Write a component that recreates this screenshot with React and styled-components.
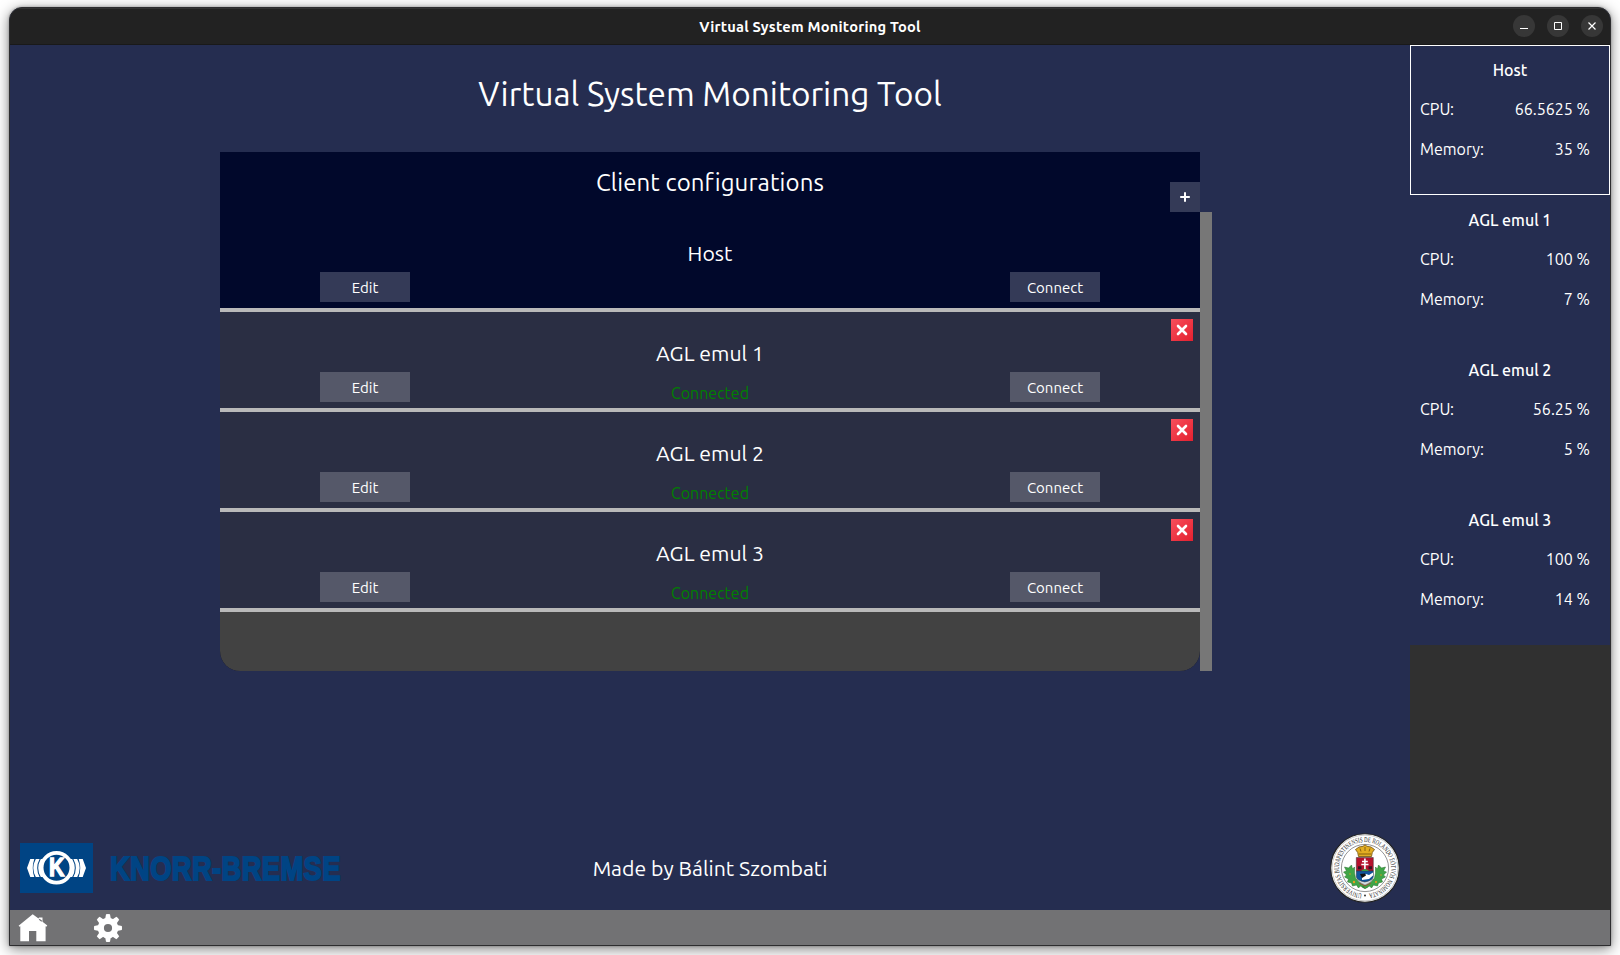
import React from "react";
import styled, { createGlobalStyle, css } from "styled-components";

const GlobalStyle = createGlobalStyle`
  * { box-sizing: border-box; }
  html, body { margin: 0; padding: 0; }
  body {
    width: 1620px;
    height: 955px;
    overflow: hidden;
    background: #fff;
    font-family: Ubuntu, "Noto Sans", sans-serif;
    color: #fff;
  }
  button { font-family: inherit; color: inherit; border: 0; padding: 0; cursor: pointer; }
`;

const Desktop = styled.div`
  width: 1620px;
  height: 955px;
  padding: 7px 9px 9px;
  overflow: hidden;
`;

const Window = styled.div`
  width: 1602px;
  height: 939px;
  display: flex;
  flex-direction: column;
  border: 1px solid #2d2d2f;
  border-radius: 13px 13px 0 0;
  overflow: hidden;
  background: #252d50;
  box-shadow: 0 3px 14px rgba(0, 0, 0, 0.5), 0 0 3px rgba(0, 0, 0, 0.3);
`;

const TitleBar = styled.header`
  flex: none;
  height: 37px;
  display: grid;
  grid-template-columns: 1fr auto 1fr;
  align-items: center;
  background: #222;
  border-top: 1px solid #333;
  border-bottom: 1px solid #191919;
`;

const WindowTitle = styled.div`
  grid-column: 2;
  font-size: 14.67px;
  font-weight: 700;
  line-height: 20px;
  letter-spacing: 0.21px;
`;

const WindowControls = styled.div`
  display: flex;
  justify-content: flex-end;
  gap: 12px;
  padding-right: 7px;
  padding-bottom: 1px;
`;

const ControlButton = styled.button`
  width: 22px;
  height: 22px;
  border-radius: 50%;
  background: #373737;
  display: grid;
  place-items: center;
`;

const Body = styled.div`
  flex: 1;
  min-height: 0;
  display: flex;
`;

const Main = styled.main`
  width: 1400px;
  display: flex;
  flex-direction: column;
  align-items: center;
`;

const PageTitle = styled.h1`
  margin: 0;
  height: 107px;
  padding-top: 25px;
  font-size: 33.33px;
  font-weight: 400;
  line-height: 48px;
`;

const Panel = styled.section`
  width: 980px;
  background: #01082b;
  border-radius: 0 0 20px 20px;
`;

const PanelHeader = styled.div`
  height: 60px;
  display: grid;
  grid-template-columns: 1fr auto 1fr;
`;

const PanelTitle = styled.h2`
  grid-column: 2;
  margin: 0;
  padding-top: 15px;
  font-size: 24px;
  font-weight: 400;
  line-height: 32px;
  letter-spacing: 0.11px;
`;

const AddButton = styled.button`
  justify-self: end;
  align-self: end;
  width: 30px;
  height: 30px;
  background: #343a57;
  display: grid;
  place-items: center;
`;

const ListArea = styled.div`
  display: flex;
  width: 992px;
  height: 459px;
`;

const ClientList = styled.div`
  width: 980px;
  height: 459px;
  overflow: hidden;
  background: #424242;
  border-radius: 0 0 20px 20px;
`;

const ScrollBar = styled.div`
  width: 12px;
  background: #777;
`;

const ClientRow = styled.div`
  height: 100px;
  display: grid;
  grid-template-columns: 90px 600px 90px;
  justify-content: center;
  align-items: end;
  padding-bottom: 6px;
  border-bottom: 4px solid #b9b9b9;
  background: ${(p) => (p.$selected ? "#01082b" : "#2a2e43")};
  position: relative;
`;

const ClientInfo = styled.div`
  align-self: start;
  height: 90px;
  padding-top: 27px;
  text-align: center;
`;

const ClientName = styled.div`
  font-size: 21.25px;
  line-height: 28px;
`;

const ClientStatus = styled.div`
  margin-top: 15px;
  font-size: 16px;
  line-height: 22px;
  color: #008000;
`;

const ActionButton = styled.button`
  width: 90px;
  height: 30px;
  padding-top: 1px;
  font-size: 15px;
  line-height: 29px;
  background: ${(p) => (p.$selected ? "#343a57" : "#555869")};
`;

const RemoveButton = styled.button`
  position: absolute;
  top: 7px;
  right: 7px;
  width: 22px;
  height: 22px;
  background: linear-gradient(135deg, #f94f5c, #e3202f);
  display: grid;
  place-items: center;
`;

const Credits = styled.div`
  margin-top: auto;
  width: 1400px;
  height: 84px;
  display: grid;
  grid-template-columns: 1fr auto 1fr;
  align-items: center;
  padding: 0 10px;
`;

const CompanyMark = styled.div`
  display: flex;
  align-items: center;
`;

const Author = styled.div`
  font-size: 21.25px;
  line-height: 28px;
`;

const SealSlot = styled.div`
  display: flex;
  justify-content: flex-end;
`;

const Sidebar = styled.aside`
  width: 200px;
  background: #303030;
`;

const StatCard = styled.div`
  height: 150px;
  padding: 0 20px 0 10px;
  background: #252d50;
  ${(p) =>
    p.$selected
      ? css`
          border: 1px solid #fff;
          padding: 0 19px 0 9px;
          & > :first-child { padding-top: 14px; height: 43px; }
        `
      : ""}
`;

const StatName = styled.div`
  height: 44px;
  padding-top: 15px;
  margin-right: -10px;
  text-align: center;
  font-size: 16px;
  font-weight: 500;
  line-height: 21px;
`;

const StatLine = styled.div`
  height: 40px;
  display: flex;
  justify-content: space-between;
  align-items: center;
  font-size: 16px;
  line-height: 20px;
`;

const NavBar = styled.footer`
  flex: none;
  height: 35px;
  display: flex;
  align-items: center;
  gap: 45px;
  padding-left: 8px;
  background: #727274;
`;

const NavButton = styled.button`
  width: 30px;
  height: 30px;
  background: transparent;
  display: grid;
  place-items: center;
`;

const Wordmark = styled.svg`
  overflow: visible;
`;

const clients = [
  { name: "Host", cpu: "66.5625 %", memory: "35 %" },
  { name: "AGL emul 1", cpu: "100 %", memory: "7 %", connected: true },
  { name: "AGL emul 2", cpu: "56.25 %", memory: "5 %", connected: true },
  { name: "AGL emul 3", cpu: "100 %", memory: "14 %", connected: true },
];

function KnorrEmblem() {
  return (
    <svg width="73" height="50" viewBox="0 0 73 50">
      <rect width="73" height="50" fill="#004484" />
      <circle cx="36.5" cy="24.8" r="14.9" fill="none" stroke="#fff" strokeWidth="3.8" />
      <g fill="#fff">
        <path d="M10.300 16H14.300Q11.200 25 14.300 34H10.300L7 25z" />
        <path d="M15.800 16H19.600Q14.800 25 19.600 34H15.800Q10.800 25 15.800 16z" />
        <path d="M20.800 16H24.200Q17.400 25 24.200 34H20.800Q15.600 25 20.800 16z" />
        <path d="M62.700 16H58.700Q61.800 25 58.700 34H62.700L66 25z" />
        <path d="M57.200 16H53.400Q58.200 25 53.400 34H57.200Q62.200 25 57.200 16z" />
        <path d="M52.200 16H48.800Q55.600 25 48.800 34H52.200Q57.400 25 52.200 16z" />
      </g>
      <text
        x="36.8"
        y="33.4"
        textAnchor="middle"
        fontFamily="Liberation Sans, sans-serif"
        fontWeight="700"
        fontSize="25"
        textLength="15.5"
        lengthAdjust="spacingAndGlyphs"
        fill="#fff"
        stroke="#fff"
        strokeWidth="1.3"
      >
        K
      </text>
    </svg>
  );
}

function KnorrWordmark() {
  return (
    <Wordmark width="256" height="50" viewBox="0 0 256 50">
      <text
        transform="translate(17 37) scale(0.8 1)"
        fontFamily="Liberation Sans, sans-serif"
        fontWeight="700"
        fontSize="34"
        letterSpacing="0.6"
        fill="#004484"
        stroke="#004484"
        strokeWidth="2"
      >
        KNORR-BREMSE
      </text>
    </Wordmark>
  );
}

function UniversitySeal() {
  return (
    <svg width="70" height="70" viewBox="0 0 70 70">
      <defs>
        <path id="seal-ring" d="M32 60.800A26 26 0 1 1 38 60.800" />
      </defs>
      <circle cx="35" cy="35" r="34.3" fill="#fff" stroke="#222" strokeWidth="1.1" />
      <circle cx="35" cy="35" r="32.9" fill="none" stroke="#999" strokeWidth="0.5" />
      <circle cx="35" cy="35" r="23.6" fill="none" stroke="#777" strokeWidth="0.8" />
      <text fontFamily="Liberation Serif, serif" fontSize="7.2" fill="#222">
        <textPath href="#seal-ring" textLength="156" lengthAdjust="spacingAndGlyphs">
          UNIVERSITAS BUDAPESTINENSIS DE ROLANDO EÖTVÖS NOMINATA
        </textPath>
      </text>
      <circle cx="35" cy="62.500" r="0.9" fill="#222" />
      <g fill="#3fa546" stroke="#236b29" strokeWidth="0.5">
        <path d="M21.500 32l1 4 2-2 0 6 1 5 4 4 5 3 3 2-3 1.500-4-2.500-2 2-2-3-4 1-1-3-4-1 1-3-4-2 2-2-3-3 3-1-2-4 4 1z" />
        <path d="M48.500 32l-1 4-2-2 0 6-1 5-4 4-5 3-3 2 3 1.500 4-2.500 2 2 2-3 4 1 1-3 4-1-1-3 4-2-2-2 3-3-3-1 2-4-4 1z" />
      </g>
      <path d="M27 46q2 4 8 6 6-2 8-6" fill="#d8dde3" stroke="#777" strokeWidth="0.6" />
      <path d="M26.300 24.500h17v13.500h-17z" fill="#b5122d" stroke="#333" strokeWidth="0.5" />
      <path d="M26.300 38h17v6q-1 3.500-8.500 5-7.500-1.500-8.500-5z" fill="#0f559c" stroke="#333" strokeWidth="0.5" />
      <path d="M34.900 25.500v11M32 28.500h5.800M31.300 31.500h7.200" stroke="#fff" strokeWidth="1.600" />
      <path d="M31 38q4-4 8 0z" fill="#3c9a42" />
      <path d="M28 34.700h3.500M38.500 34.700h3.500" stroke="#351522" strokeWidth="3" />
      <path d="M32 44l4-3 3 1 4-2.500v3l-4 3.500-7 1z" fill="#fff" />
      <path d="M30 41l5-.500 1 2-4 2.500z" fill="#111" />
      <path
        d="M28.500 23.500l-.800-4-2.200-3 3.500-2.500 4-.700 2-1.500 2 1.500 4 .700 3.500 2.500-2.200 3-.800 4z"
        fill="#e3ae22"
        stroke="#6d4c0b"
        strokeWidth="0.800"
      />
      <path d="M29 21h12M31 18.500l-1-3M35 18v-4M39 18.500l1-3" stroke="#7c570d" strokeWidth="0.900" />
      <g fill="#ef9a20">
        <circle cx="24" cy="49" r="1.200" />
        <circle cx="20" cy="41" r="0.700" />
        <circle cx="46" cy="49" r="1" />
        <circle cx="51" cy="42" r="0.700" />
      </g>
      <path d="M29 50l6 3 6-3" fill="none" stroke="#b63a2e" strokeWidth="0.700" />
    </svg>
  );
}

function HomeIcon() {
  return (
    <svg width="30" height="30" viewBox="0 0 30 30">
      <path
        fill="#fff"
        d="M14.700 1.300L20.500 5.600L21 4.600H24.500V8.800L29.300 12.600L28.300 13.700L27.600 13.200V28.200H18.300V18H11V28.200H2.300V13.200L1.600 13.700L.600 12.700z"
      />
      <path d="M21.200 6.200L23.800 8.200" stroke="#727274" strokeWidth="1.200" />
    </svg>
  );
}

function GearIcon() {
  const teeth = [0, 45, 90, 135, 180, 225, 270, 315];
  return (
    <svg width="30" height="30" viewBox="0 0 30 30">
      <circle cx="15" cy="15" r="7.200" fill="none" stroke="#fff" strokeWidth="6.200" />
      {teeth.map((angle) => (
        <path
          key={angle}
          d="M12.100 6L13 1.200Q15 .700 17 1.200L17.900 6z"
          fill="#fff"
          transform={`rotate(${angle} 15 15)`}
        />
      ))}
    </svg>
  );
}

function Client({ client, selected }) {
  return (
    <ClientRow $selected={selected}>
      <ActionButton $selected={selected}>Edit</ActionButton>
      <ClientInfo>
        <ClientName>{client.name}</ClientName>
        {client.connected && <ClientStatus>Connected</ClientStatus>}
      </ClientInfo>
      <ActionButton $selected={selected}>Connect</ActionButton>
      {!selected && (
        <RemoveButton aria-label="Remove">
          <svg width="12" height="12" viewBox="0 0 12 12">
            <path d="M2 2l8 8M10 2l-8 8" stroke="#fff" strokeWidth="2.600" strokeLinecap="round" />
          </svg>
        </RemoveButton>
      )}
    </ClientRow>
  );
}

export default function App() {
  return (
    <Desktop>
      <GlobalStyle />
      <Window>
        <TitleBar>
          <WindowTitle>Virtual System Monitoring Tool</WindowTitle>
          <WindowControls>
            <ControlButton aria-label="Minimize">
              <svg width="10" height="10" viewBox="0 0 10 10">
                <path d="M1 7.500h8" stroke="#fff" />
              </svg>
            </ControlButton>
            <ControlButton aria-label="Maximize">
              <svg width="8" height="8" viewBox="0 0 8 8">
                <path d="M.5 .5h7v7h-7z" fill="none" stroke="#fff" />
              </svg>
            </ControlButton>
            <ControlButton aria-label="Close">
              <svg width="8" height="8" viewBox="0 0 8 8">
                <path d="M.5 .5l7 7M7.500 .5l-7 7" stroke="#fff" strokeWidth="1.200" />
              </svg>
            </ControlButton>
          </WindowControls>
        </TitleBar>
        <Body>
          <Main>
            <PageTitle>Virtual System Monitoring Tool</PageTitle>
            <Panel>
              <PanelHeader>
                <PanelTitle>Client configurations</PanelTitle>
                <AddButton aria-label="Add">
                  <svg width="10" height="10" viewBox="0 0 10 10">
                    <path d="M5 .2v9.600M.2 5h9.600" stroke="#fff" strokeWidth="2" />
                  </svg>
                </AddButton>
              </PanelHeader>
              <ListArea>
                <ClientList>
                  {clients.map((client, i) => (
                    <Client key={client.name} client={client} selected={i === 0} />
                  ))}
                </ClientList>
                <ScrollBar />
              </ListArea>
            </Panel>
            <Credits>
              <CompanyMark>
                <KnorrEmblem />
                <KnorrWordmark />
              </CompanyMark>
              <Author>Made by Bálint Szombati</Author>
              <SealSlot>
                <UniversitySeal />
              </SealSlot>
            </Credits>
          </Main>
          <Sidebar>
            {clients.map((client, i) => (
              <StatCard key={client.name} $selected={i === 0}>
                <StatName>{client.name}</StatName>
                <StatLine>
                  <span>CPU:</span>
                  <span>{client.cpu}</span>
                </StatLine>
                <StatLine>
                  <span>Memory:</span>
                  <span>{client.memory}</span>
                </StatLine>
              </StatCard>
            ))}
          </Sidebar>
        </Body>
        <NavBar>
          <NavButton aria-label="Home">
            <HomeIcon />
          </NavButton>
          <NavButton aria-label="Settings">
            <GearIcon />
          </NavButton>
        </NavBar>
      </Window>
    </Desktop>
  );
}
